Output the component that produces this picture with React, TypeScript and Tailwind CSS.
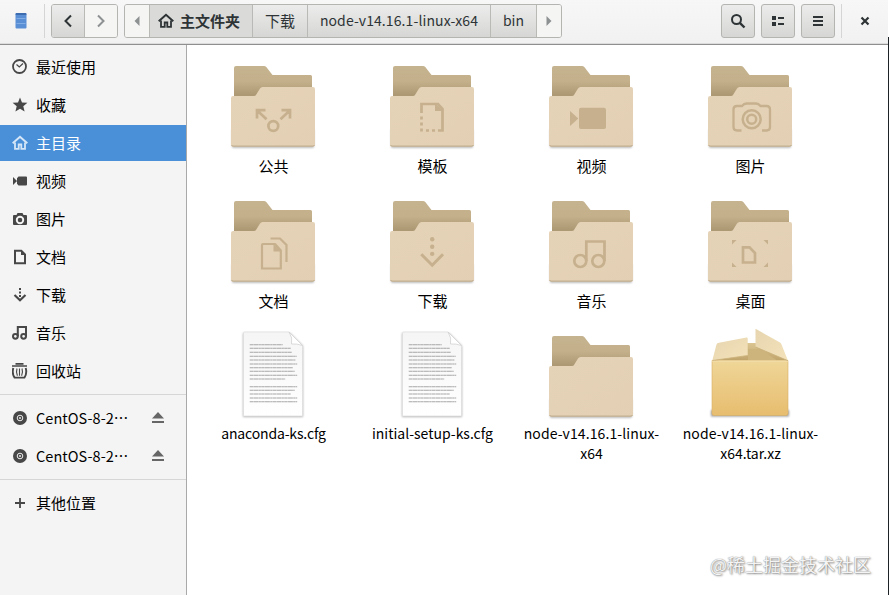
import type { ReactNode } from 'react';

const FONT = "font-['Noto_Sans_CJK_SC','Noto_Sans',sans-serif]";

/* ---------- symbolic 16px icons ---------- */

function Symbolic({ children, size = 16 }: { children: ReactNode; size?: number }) {
  return (
    <svg width={size} height={size} viewBox="0 0 16 16" fill="none" stroke="currentColor" strokeWidth="2" className="shrink-0">
      {children}
    </svg>
  );
}

const ClockIcon = () => (
  <Symbolic>
    <circle cx="7.5" cy="7.5" r="6.5" strokeWidth="1.8" />
    <path d="M4.500 5.500 7.300 8 11 4.500" strokeWidth="1.2" />
  </Symbolic>
);
const StarIcon = () => (
  <Symbolic>
    <path d="M8 .6 10 5.400l5.400.4-4.100 3.500 1.300 5.300L8 11.800l-4.600 2.800 1.300-5.300L.6 5.800l5.400-.4z" fill="currentColor" stroke="none" />
  </Symbolic>
);
const HomeIcon = () => (
  <Symbolic>
    <path d="M.7 8.200 8 1.800l7.300 6.400" />
    <path d="M3 7.500v6.300h3.700V9.500h2.600v4.300H13V7.500" strokeWidth="1.8" />
  </Symbolic>
);
const VideoIcon = () => (
  <Symbolic>
    <path d="M1 4v8l4-4zM5 5.300 6.500 3.500H14q1 0 1 1v7q0 1-1 1H6.500L5 10.700z" fill="currentColor" stroke="none" />
  </Symbolic>
);
const CameraIcon = () => (
  <Symbolic>
    <path
      fillRule="evenodd"
      fill="currentColor"
      stroke="none"
      d="M5.500 2h5l1 2H14q1 0 1 1v8q0 1-1 1H2q-1 0-1-1V5q0-1 1-1h2.500zM8 4.800a4.200 4.200 0 1 0 0 8.400 4.200 4.200 0 0 0 0-8.400m0 1.900a2.300 2.300 0 1 1 0 4.600 2.300 2.300 0 0 1 0-4.600"
    />
  </Symbolic>
);
const DocumentIcon = () => (
  <Symbolic>
    <path d="M3 1.800h6.300L13 5.500v8.700H3z" />
    <path d="M9 1v5h5z" fill="currentColor" stroke="none" />
  </Symbolic>
);
const DownloadIcon = () => (
  <Symbolic>
    <path d="M8 1v2M8 4.500v2M8 8v2" />
    <path d="M2.500 8 8 13.200 13.500 8" strokeWidth="2.200" />
  </Symbolic>
);
const MusicIcon = () => (
  <Symbolic>
    <circle cx="3.400" cy="11.300" r="2.400" />
    <circle cx="11.600" cy="11.300" r="2.400" />
    <path d="M5.800 11.300V2H14v9.300" />
  </Symbolic>
);
const TrashIcon = () => (
  <Symbolic>
    <path d="M3.500 .8h8M0 3h15" strokeWidth="1.700" />
    <path d="M1.300 5C.3 8.500 .8 12 2.600 14.600h9.800C14.200 12 14.700 8.500 13.700 5" strokeWidth="1.900" />
    <path d="M5 5.500C4.200 8 4.300 10.500 5.400 12.800M7.500 5.500v7.300M10 5.500C10.800 8 10.700 10.500 9.600 12.800" strokeWidth="1.100" />
  </Symbolic>
);
const DiscIcon = () => (
  <Symbolic>
    <circle cx="8" cy="8" r="7" fill="currentColor" stroke="none" />
    <circle cx="8" cy="8" r="2.800" stroke="#eee" strokeWidth="1" />
    <circle cx="8" cy="8" r="1.100" fill="#ddd" stroke="none" />
  </Symbolic>
);
const PlusIcon = () => (
  <Symbolic>
    <path d="M8 3v10M3 8h10" strokeWidth="1.800" />
  </Symbolic>
);
const EjectIcon = () => (
  <Symbolic>
    <path d="M8 2 14 8.500H2zM2 11h12v2H2z" fill="currentColor" stroke="none" />
  </Symbolic>
);

/* ---------- large icons ---------- */

type Emblem = 'public' | 'templates' | 'videos' | 'pictures' | 'documents' | 'downloads' | 'music' | 'desktop';

const emblems: Record<Emblem, ReactNode> = {
  public: (
    <>
      <path d="M32 59.500V51.200H40.500M32.500 51.700 41.500 60.300M65 59.500V51.200H56.500M64.500 51.700 55.500 60.300" />
      <circle cx="48.300" cy="67" r="4.900" />
    </>
  ),
  templates: (
    <>
      <path d="M37.500 54V45H54L58.500 50V71.500H54" />
      <path d="M51 44v8h8z" fill="#c6b08d" stroke="none" />
      <path d="M37.500 57.500V73" strokeDasharray="3 3" />
      <path d="M42 71.500H53" strokeDasharray="3 3" />
    </>
  ),
  videos: (
    <g fill="#c6b08d" stroke="none">
      <path d="M27 52v15l8.300-7.500z" />
      <rect x="36" y="48.700" width="27" height="21.300" rx="2" />
    </g>
  ),
  pictures: (
    <>
      <path d="M39.500 71.500H35Q31.500 71.500 31.500 68V50.500Q31.500 47 35 47H40Q42 44.500 44.500 44.500H54Q56.500 44.500 58.500 47H64.500Q68 47 68 50.500V68Q68 71.500 64.500 71.500H60" strokeWidth="2.300" />
      <circle cx="49.700" cy="60.300" r="9" strokeWidth="2.500" />
      <circle cx="49.700" cy="60.300" r="4.500" strokeWidth="2.500" />
    </>
  ),
  documents: (
    <>
      <path d="M38 50H50L55.800 56.500V74.500H37V51Q37 50 38 50Z" strokeWidth="2.200" />
      <path d="M48.500 50v7.500h7.500z" fill="#c6b08d" stroke="none" />
      <path d="M45.500 44.500H55L61.500 51V68" strokeWidth="2.200" />
    </>
  ),
  downloads: (
    <>
      <path d="M37.300 60.300 48.200 71.200 59 60.300" strokeWidth="3" />
      <g fill="#c6b08d" stroke="none">
        <circle cx="48.200" cy="45.300" r="2.200" />
        <circle cx="48.200" cy="52.700" r="2.200" />
        <circle cx="48.200" cy="59.900" r="2.200" />
      </g>
    </>
  ),
  music: (
    <>
      <circle cx="37.300" cy="67" r="6" />
      <circle cx="55.300" cy="67" r="6" />
      <path d="M43.300 67V47.500H61.500V67" />
    </>
  ),
  desktop: (
    <>
      <path d="M41 53.300H47.500L53 59V68.500H41Z" />
      <path d="M30 46h4.500L30 50.500zM66 46h-4.500l4.500 4.500zM30 73h4.500L30 68.500zM66 73h-4.500l4.500-4.500z" fill="#c6b08d" stroke="none" />
    </>
  ),
};

function Artwork({ children }: { children: ReactNode }) {
  return (
    <svg width="96" height="96" viewBox="0 0 96 96" fill="none" className="mr-px shrink-0">
      {children}
    </svg>
  );
}

function Folder({ emblem }: { emblem?: Emblem }) {
  return (
    <Artwork>
      <defs>
        <linearGradient id="folderBack" x1="0" y1="0" x2="0" y2="1">
          <stop offset="0" stopColor="#c5b38f" />
          <stop offset=".4" stopColor="#c4b08b" />
          <stop offset=".75" stopColor="#ad9a74" />
        </linearGradient>
        <linearGradient id="folderFront" x1="0" y1="0" x2="1" y2="1">
          <stop offset="0" stopColor="#e5d3b8" />
          <stop offset="1" stopColor="#e3d0b4" />
        </linearGradient>
        <filter id="folderShadow" x="-10%" y="-10%" width="120%" height="120%">
          <feGaussianBlur stdDeviation=".9" />
        </filter>
      </defs>
      <rect x="7" y="70" width="82" height="18.800" rx="1.500" fill="#000" opacity=".3" filter="url(#folderShadow)" />
      <path d="M9 9Q9 7 11 7H39Q40.300 7 41.300 8L47.500 16H85.500Q87 16 87 17.500V45H9Z" fill="url(#folderBack)" />
      <path d="M6 39Q6 37 8 37H29Q30.500 37 31.300 35.500L35 29.500Q36 28 37.500 28H88Q90 28 90 30V85.500Q90 87.500 88 87.500H8Q6 87.500 6 85.500Z" fill="url(#folderFront)" />
      <path d="M6.500 86Q7 87.100 8 87.100H88Q89 87.100 89.500 86" stroke="#bda988" />
      {emblem && (
        <g stroke="#c6b08d" strokeWidth="2.700">
          {emblems[emblem]}
        </g>
      )}
    </Artwork>
  );
}

const textLines: [number, number][] = [
  [15.700, 33], [19.300, 41], [23.300, 42], [27.300, 47], [31, 46], [35, 47.500], [38.700, 43], [42.300, 45], [46.300, 47.500], [50, 35.500],
  [57.700, 47.500], [61.300, 45], [65, 41], [69, 47.500], [72.700, 47.500],
];

function TextFile() {
  return (
    <Artwork>
      <defs>
        <linearGradient id="paper" x1="0" y1="0" x2="0" y2="1">
          <stop offset="0" stopColor="#f5f5f5" />
          <stop offset="1" stopColor="#fff" />
        </linearGradient>
        <filter id="paperShadow" x="-10%" y="-10%" width="120%" height="120%">
          <feGaussianBlur stdDeviation=".9" />
        </filter>
      </defs>
      <path d="M18 4H65L78 17V88H18Z" fill="#000" opacity=".3" filter="url(#paperShadow)" />
      <path d="M18.500 4Q18.500 3 19.500 3H64L77.500 16.500V87H18.500Z" fill="url(#paper)" stroke="#dedede" strokeWidth=".7" />
      <path d="M64 3Q68 9 66.500 15 72 14.500 77.500 16.500Z" fill="#fff" stroke="#d2d2d2" strokeWidth=".8" />
      {textLines.map(([y, w]) => (
        <path key={y} d={`M24.700 ${y}h${w}`} stroke="#a6a6a6" strokeWidth="1.100" strokeDasharray="3.300 .3 5.100 .3 2.200 .3" />
      ))}
    </Artwork>
  );
}

function Package() {
  return (
    <Artwork>
      <defs>
        <linearGradient id="boxFront" x1="0" y1="0" x2="0" y2="1">
          <stop offset="0" stopColor="#efd698" />
          <stop offset="1" stopColor="#e7bd6f" />
        </linearGradient>
        <linearGradient id="flap" x1="0" y1="0" x2="1" y2="1">
          <stop offset="0" stopColor="#e6d5ae" />
          <stop offset="1" stopColor="#f3e2ba" />
        </linearGradient>
        <linearGradient id="inside" x1="0" y1="0" x2="0" y2="1">
          <stop offset="0" stopColor="#dbc592" />
          <stop offset="1" stopColor="#bfa369" />
        </linearGradient>
        <filter id="boxShadow" x="-10%" y="-30%" width="120%" height="160%">
          <feGaussianBlur stdDeviation="1" />
        </filter>
      </defs>
      <rect x="9" y="81" width="78" height="6.500" fill="#000" opacity=".4" filter="url(#boxShadow)" />
      <path d="M11 32 16 14H75L85 32Z" fill="url(#inside)" />
      <path d="M46 20H58L76 32H46Z" fill="#cdb47d" />
      <path d="M10 31.500H86V84.500Q86 86.500 84 86.500H12Q10 86.500 10 84.500Z" fill="url(#boxFront)" stroke="#d9b065" strokeWidth=".6" />
      <path d="M10 32H86" stroke="#f5e2b4" />
      <path d="M10.300 31.500 14.500 15.500Q15 14 17 13.700L44.500 8.500Q45.700 8.400 45.700 9.500V26.500Z" fill="url(#flap)" />
      <path d="M10.300 31.500 45.700 26.500" stroke="#cdb27b" strokeWidth=".8" />
      <path d="M53.500 0Q53 -.5 54 0L78 13.500Q79 14 79.500 15.500L86 31.700 53.500 18Z" fill="url(#flap)" />
      <path d="M53.500 18 86 31.700" stroke="#c8ad77" strokeWidth=".8" />
    </Artwork>
  );
}

/* ---------- sidebar ---------- */

interface Place {
  label: string;
  icon: ReactNode;
  selected?: boolean;
  ejectable?: boolean;
}

const places: Place[] = [
  { label: '最近使用', icon: <ClockIcon /> },
  { label: '收藏', icon: <StarIcon /> },
  { label: '主目录', icon: <HomeIcon />, selected: true },
  { label: '视频', icon: <VideoIcon /> },
  { label: '图片', icon: <CameraIcon /> },
  { label: '文档', icon: <DocumentIcon /> },
  { label: '下载', icon: <DownloadIcon /> },
  { label: '音乐', icon: <MusicIcon /> },
  { label: '回收站', icon: <TrashIcon /> },
];

const volumes: Place[] = [
  { label: 'CentOS-8-2…', icon: <DiscIcon />, ejectable: true },
  { label: 'CentOS-8-2…', icon: <DiscIcon />, ejectable: true },
];

function PlaceRow({ label, icon, selected, ejectable }: Place) {
  return (
    <li className={`flex h-9 items-center pl-3 pr-5 ${selected ? 'bg-[#4a90d9] text-white' : 'text-black'}`}>
      <span className={selected ? 'text-[#d5e6f7]' : 'text-[#474747]'}>{icon}</span>
      <span lang="zh-CN" className={`ml-2 grow whitespace-nowrap leading-5 ${ejectable ? 'text-[14.5px] tracking-[0.05px]' : ''}`}>
        {label}
      </span>
      {ejectable && (
        <span className="text-[#666]">
          <EjectIcon />
        </span>
      )}
    </li>
  );
}

function Sidebar() {
  return (
    <nav className="w-[187px] shrink-0 border-r border-[#a9a9a9] bg-[#f4f4f4] pt-1">
      <ul className="flex flex-col gap-0.5">
        {places.map((p) => (
          <PlaceRow key={p.label} {...p} />
        ))}
      </ul>
      <ul className="mt-[5px] flex flex-col gap-0.5 border-t border-[#d6d6d6] pt-[5px]">
        {volumes.map((p, i) => (
          <PlaceRow key={i} {...p} />
        ))}
      </ul>
      <ul className="mt-[5px] border-t border-[#d6d6d6] pt-[5px]">
        <PlaceRow label="其他位置" icon={<PlusIcon />} />
      </ul>
    </nav>
  );
}

/* ---------- header ---------- */

const raised = 'bg-linear-to-b from-[#ececec] to-[#d6d6d4]';

function ToolButton({ children }: { children: ReactNode }) {
  return (
    <button className={`flex h-[34px] w-[34px] items-center justify-center rounded-[3px] border border-[#b4b4b1] text-[#2e3436] ${raised}`}>
      {children}
    </button>
  );
}

function Header() {
  return (
    <header className="flex h-[45px] shrink-0 border-b border-[#8f8f8f] bg-linear-to-b from-[#f7f7f7] to-[#f1f1f1] pt-1 text-[#2e3436] shadow-[inset_0_-1px_0_#dcdcdc]">
      <div className="flex h-[34px] w-11 items-center pl-[15px]">
        <svg width="12" height="16" viewBox="0 0 12 16">
          <rect x=".5" y=".5" width="11" height="15" rx="1" fill="#5a8fd6" />
          <rect x=".5" y="0" width="11" height="2" rx="1" fill="#3d6cb0" />
          <path d="M1.500 5.500h9M1.500 10.500h9" stroke="#82ace4" />
        </svg>
      </div>
      <div className="h-[34px] w-px bg-[#d5d5d5]" />
      <div className="ml-1.5 flex h-[34px] w-[67px] overflow-hidden rounded-[3px] border border-[#b4b4b1]">
        <button className={`flex w-[33px] items-center justify-center border-r border-[#b9b9b6] ${raised}`}>
          <Symbolic><path d="M11 2.500 5.500 8 11 13.500" /></Symbolic>
        </button>
        <button className="flex grow items-center justify-center bg-[#f5f5f4] text-[#8e9192]">
          <Symbolic><path d="M5 2.500 10.500 8 5 13.500" /></Symbolic>
        </button>
      </div>
      <div className="ml-1.5 flex h-[34px] w-[438px] overflow-hidden rounded-[3px] border border-[#b4b4b1] leading-5">
        <button className="flex w-[25px] items-center justify-center border-r border-[#b9b9b6] bg-[#f5f5f4] text-[#8e9192]">
          <Symbolic><path d="M10.500 3v10L5.500 8z" fill="currentColor" stroke="none" /></Symbolic>
        </button>
        <button className="flex w-[103px] items-center border-r border-[#b9b9b6] bg-[#dadad9] pl-2 font-bold">
          <HomeIcon />
          <span className="ml-1.5 whitespace-nowrap">主文件夹</span>
        </button>
        <button className={`w-[55px] border-r border-[#b9b9b6] ${raised}`}>下载</button>
        <button className={`w-[183px] border-r border-[#b9b9b6] pb-0.5 text-[14px] tracking-[0.1px] ${raised}`}>node-v14.16.1-linux-x64</button>
        <button className={`w-[46px] border-r border-[#b9b9b6] pb-0.5 text-[14px] ${raised}`}>bin</button>
        <button className="flex grow items-center justify-center bg-[#f5f5f4] text-[#8e9192]">
          <Symbolic><path d="M5.500 3v10l5-5z" fill="currentColor" stroke="none" /></Symbolic>
        </button>
      </div>
      <div className="ml-auto flex h-[34px] gap-1.5">
        <ToolButton>
          <Symbolic>
            <circle cx="6.500" cy="6.500" r="4.500" />
            <path d="m9.800 9.800 4.700 4.700" strokeWidth="2.400" />
          </Symbolic>
        </ToolButton>
        <ToolButton>
          <Symbolic>
            <path d="M2 3h4v4H2zM2 9h4v4H2z" fill="currentColor" stroke="none" />
            <path d="M8 5h6M8 11h6" />
          </Symbolic>
        </ToolButton>
        <ToolButton>
          <Symbolic><path d="M3 4h10M3 8h10M3 12h10" /></Symbolic>
        </ToolButton>
        <div className="w-px bg-[#d5d5d5]" />
        <button className="mr-1.5 flex w-[34px] items-center justify-center">
          <Symbolic><path d="m4.500 4.500 7 7M11.500 4.500l-7 7" strokeWidth="2.200" /></Symbolic>
        </button>
      </div>
    </header>
  );
}

/* ---------- file grid ---------- */

const files: { name: string; lines?: string[]; icon: ReactNode }[] = [
  { name: '公共', icon: <Folder emblem="public" /> },
  { name: '模板', icon: <Folder emblem="templates" /> },
  { name: '视频', icon: <Folder emblem="videos" /> },
  { name: '图片', icon: <Folder emblem="pictures" /> },
  { name: '文档', icon: <Folder emblem="documents" /> },
  { name: '下载', icon: <Folder emblem="downloads" /> },
  { name: '音乐', icon: <Folder emblem="music" /> },
  { name: '桌面', icon: <Folder emblem="desktop" /> },
  { name: 'anaconda-ks.cfg', lines: ['anaconda-ks.cfg'], icon: <TextFile /> },
  { name: 'initial-setup-ks.cfg', lines: ['initial-setup-ks.cfg'], icon: <TextFile /> },
  { name: 'node-v14.16.1-linux-x64', lines: ['node-v14.16.1-linux-', 'x64'], icon: <Folder /> },
  { name: 'node-v14.16.1-linux-x64.tar.xz', lines: ['node-v14.16.1-linux-', 'x64.tar.xz'], icon: <Package /> },
];

function FileGrid() {
  return (
    <main className="grow bg-white pl-[7px] pt-[14px]">
      <div className="grid grid-cols-[repeat(4,159px)] auto-rows-[135px]">
        {files.map(({ name, lines, icon }) => (
          <figure key={name} className="flex flex-col items-center">
            {icon}
            <figcaption
              className={`flex flex-col items-center whitespace-nowrap leading-5 text-black ${lines ? '-mt-0.5 text-[14px]' : 'mt-px'}`}
            >
              {(lines ?? [name]).map((line) => (
                <span key={line} className={line.startsWith('node') ? 'tracking-[0.1px]' : line.startsWith('ana') ? 'tracking-[-0.15px]' : ''}>
                  {line}
                </span>
              ))}
            </figcaption>
          </figure>
        ))}
      </div>
    </main>
  );
}

export default function App() {
  return (
    <div className={`relative flex h-[595px] w-[889px] overflow-hidden bg-white text-[15px] ${FONT}`}>
      <div className="flex w-[888px] flex-col">
        <Header />
        <div className="flex min-h-0 grow">
          <Sidebar />
          <FileGrid />
        </div>
      </div>
      <div className="mt-[37px] w-px bg-[#1d2226]" />
      <span className="absolute bottom-[18px] right-[18px] whitespace-nowrap text-[18px] leading-[26px] text-[#f4f4f4] [text-shadow:0_0_1px_#777,1px_1px_2px_#888]">
        @稀土掘金技术社区
      </span>
    </div>
  );
}
